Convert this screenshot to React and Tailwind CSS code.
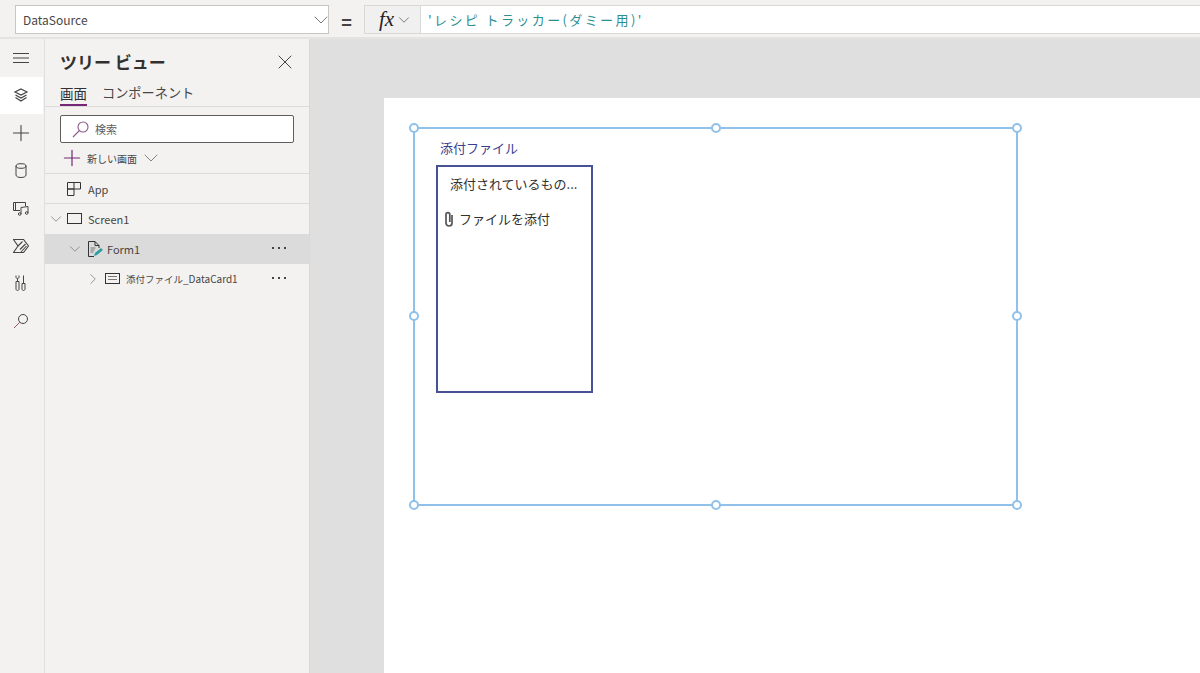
import { ChevronDown, ChevronRight, Plus, X } from 'lucide-react';

const font = 'font-["Noto_Sans_CJK_JP","Noto_Sans",sans-serif]';

function Rail() {
  const item = 'h-[37.6px] flex items-center justify-center pr-[2px]';
  return (
    <div className="w-[45px] shrink-0 border-r border-[#e1dfdd] flex flex-col pr-[1px]">
      <div className={item}>
        <svg width="16" height="12" viewBox="0 0 16 12" stroke="#444" fill="none"><path d="M0 1.5h16M0 6h16M0 10.5h16" /></svg>
      </div>
      <div className={`${item} bg-white`}>
        <svg width="16" height="16" viewBox="0 0 16 16" fill="none" stroke="#444" strokeWidth="1.2"><path d="M8 2l6 3-6 3-6-3zM2.500 8L8 11l5.500-3M2.500 10.500L8 14l5.500-3.500" /></svg>
      </div>
      <div className={item}><Plus size={26} strokeWidth={1} color="#444" /></div>
      <div className={item}>
        <svg width="12" height="15" viewBox="0 0 12 15" fill="none" stroke="#444"><path d="M1 3v9c0 1.500 2 2.500 5 2.500s5-1 5-2.500V3" /><ellipse cx="6" cy="3" rx="5" ry="2.300" /></svg>
      </div>
      <div className={item}>
        <svg width="16" height="15" viewBox="0 0 16 15" fill="none" stroke="#444"><path d="M7 9.500H.5v-8h12V5" /><path d="M2.500 1.500v8M8 6.500V13M15 5.500V12M8 6.500l7-1" /><circle cx="6.700" cy="13" r="1.300" /><circle cx="13.700" cy="12" r="1.300" /></svg>
      </div>
      <div className={item}>
        <svg width="16" height="14" viewBox="0 0 16 14" fill="none" stroke="#444" strokeWidth="1.100"><path d="M.5.500h10l5 6.500-5 6.500H.5L5 7z" /><path d="M5 7l4.500-4.500M7 10.500L12.500 5M8 13l5.500-6" /></svg>
      </div>
      <div className={item}>
        <svg width="11" height="16" viewBox="0 0 11 16" fill="none" stroke="#444"><path d="M1 6.500h3v7.500c0 .8-.6 1.500-1.500 1.500S1 14.800 1 14zM7 8.500h3V14c0 .8-.6 1.500-1.500 1.500S7 14.800 7 14zM2.500 6.500V3.500M8.500 8.500V.5M1 .5v1.500c0 1 .6 1.500 1.500 1.500S4 3 4 2V.5" /></svg>
      </div>
      <div className={item}>
        <svg width="16" height="16" viewBox="0 0 16 16" fill="none" stroke="#444"><circle cx="10" cy="6" r="4.500" /><path d="M6.800 9.200L1 15" stroke="#8a5a6a" /></svg>
      </div>
    </div>
  );
}

function Dots() {
  return (
    <div className="flex gap-[4px] ml-auto mr-[23px] mb-[3px]">
      <span className="w-[2px] h-[2px] bg-[#444]" />
      <span className="w-[2px] h-[2px] bg-[#444]" />
      <span className="w-[2px] h-[2px] bg-[#444]" />
    </div>
  );
}

function TreePanel() {
  return (
    <div className="w-[264px] shrink-0 flex flex-col">
      <div className="h-[44px] flex items-center pl-[15px] pr-[12px] pt-[1px]">
        <span className="text-[17px] font-semibold text-[#323130]">ツリー ビュー</span>
        <X size={24} strokeWidth={1} color="#444" className="ml-auto" />
      </div>
      <div className="h-[23px] flex gap-[15px] pl-[15px] border-b border-[#dddbd9] box-content">
        <span className="relative text-[13.500px] leading-[20px] text-[#323130]">
          画面
          <span className="absolute left-0 right-0 top-[21px] h-[2px] bg-[#742774]" />
        </span>
        <span className="text-[13.200px] leading-[20px] text-[#484644]">コンポーネント</span>
      </div>
      <div className="ml-[15px] mt-[8px] w-[234px] h-[28px] bg-white border border-[#605e5c] rounded-[2px] flex items-center pl-[11px] gap-[6px]">
        <svg width="17" height="17" viewBox="0 0 17 17" fill="none" stroke="#8a5a8a" strokeWidth="1.100"><circle cx="11" cy="6" r="5" /><path d="M7.500 9.500L1 16" /></svg>
        <span className="text-[11px] text-[#605e5c]">検索</span>
      </div>
      <div className="h-[31px] flex items-center pl-[14px] border-b border-[#dddbd9]">
        <Plus size={26} strokeWidth={1.100} color="#742774" />
        <span className="text-[10px] text-[#484644] ml-[2px]">新しい画面</span>
        <ChevronDown size={24} strokeWidth={0.8} color="#666" className="ml-[2px]" />
      </div>
      <div className="h-[30px] flex items-center pl-[22px] pt-[2px] border-b border-[#dddbd9]">
        <svg className="-mt-[2px]" width="14" height="14" viewBox="0 0 14 14" fill="none" stroke="#333"><path d="M.5.500h13v6.500H.5zM.5 7h6.500v6.500H.5zM7 .5V7" /></svg>
        <span className="text-[11px] text-[#484644] ml-[7px]">App</span>
      </div>
      <div className="h-[30px] flex items-center pl-[2px]">
        <ChevronDown size={18} strokeWidth={1} color="#777" />
        <svg className="ml-[2px]" width="16" height="12" viewBox="0 0 16 12" fill="none" stroke="#333"><rect x=".5" y=".5" width="14" height="10" /></svg>
        <span className="text-[11px] text-[#484644] ml-[5px]">Screen1</span>
      </div>
      <div className="h-[30px] flex items-center pl-[21px] bg-[#dbdbdb]">
        <ChevronDown size={18} strokeWidth={1} color="#777" />
        <svg className="ml-[3px]" width="16" height="16" viewBox="0 0 16 16" fill="none"><path d="M7 15.500H1.500V.5H8l4 4V7M8 .5v4h4" stroke="#333" /><path d="M3.500 7h5M3.500 9h4M3.500 11h3" stroke="#777" /><path d="M7 15l1-3 6-5 2 2-6 5z" fill="#2f9ea0" /></svg>
        <span className="text-[11px] text-[#484644] ml-[4px]">Form1</span>
        <Dots />
      </div>
      <div className="h-[30px] flex items-center pl-[39px]">
        <ChevronRight size={18} strokeWidth={1} color="#777" />
        <svg className="ml-[3px]" width="16" height="12" viewBox="0 0 16 12" fill="none" stroke="#333"><rect x=".5" y=".5" width="14" height="10" /><path d="M3 3.500h9M3 6.500h9" stroke="#777" /></svg>
        <span className="text-[9.500px] text-[#484644] ml-[5px] whitespace-nowrap">添付ファイル<span className="text-[10px]">_DataCard1</span></span>
        <Dots />
      </div>
    </div>
  );
}

function Handle({ className }) {
  return <span className={`absolute w-[10px] h-[10px] rounded-full bg-white border-2 border-[#8fc1ea] ${className}`} />;
}

export default function App() {
  return (
    <div className={`w-[1200px] h-[673px] overflow-hidden bg-[#f3f2f1] flex flex-col ${font}`}>
      <div className="h-[39px] shrink-0 flex items-start pt-[5px] pl-[15px] border-b-2 border-[#e4e3e2]">
        <div className="w-[314px] h-[29px] bg-white border border-[#c8c6c4] flex items-center pl-[7px] pr-[2px]">
          <span className="text-[12px] text-[#484644]">DataSource</span>
          <ChevronDown size={24} strokeWidth={0.8} color="#555" className="ml-auto -mr-[7px]" />
        </div>
        <span className="w-[35px] text-center text-[18px] leading-[30px] font-bold text-[#444] pt-[1px]">=</span>
        <div className="w-[57px] h-[29px] bg-[#f0f0f0] border border-[#d8d8d8] flex items-center pl-[14px]">
          <span className="font-['Liberation_Serif',serif] italic text-[21px] text-[#222] leading-none">fx</span>
          <ChevronDown size={18} strokeWidth={1} color="#555" className="ml-[1px]" />
        </div>
        <div className="flex-1 h-[29px] bg-white border-y border-[#d8d8d8] flex items-center pl-[7px]">
          <span className="text-[13px] tracking-[2.400px] text-[#2b8f94] whitespace-pre">'レシピ トラッカー(ダミー用)'</span>
        </div>
      </div>
      <div className="flex-1 flex min-h-0">
        <Rail />
        <TreePanel />
        <div className="flex-1 bg-[#dfdfdf] flex flex-col border-l border-[#d8d8d8] pt-[59px] pl-[74px]">
          <div className="flex-1 bg-white relative">
            <div className="absolute left-[29px] top-[29px] w-[605px] h-[379px] border-2 border-[#8fc1ea]">
              <Handle className="-left-[6px] -top-[6px]" />
              <Handle className="left-[296px] -top-[6px]" />
              <Handle className="-right-[6px] -top-[6px]" />
              <Handle className="-left-[6px] top-[182px]" />
              <Handle className="-right-[6px] top-[182px]" />
              <Handle className="-left-[6px] -bottom-[6px]" />
              <Handle className="left-[296px] -bottom-[6px]" />
              <Handle className="-right-[6px] -bottom-[6px]" />
              <div className="absolute left-[25px] top-[9px] text-[13px] text-[#3a3f8f]">添付ファイル</div>
              <div className="absolute left-[21px] top-[36px] w-[157px] h-[228px] border-2 border-[#4a5296] flex flex-col">
                <div className="text-[13px] text-[#323130] pl-[12px] pt-[7px] leading-[20px] whitespace-nowrap">添付されているもの...</div>
                <div className="flex items-center pl-[6px] mt-[15px]">
                  <svg width="10" height="16" viewBox="0 0 10 16" fill="none" stroke="#555" strokeWidth="1.700"><path d="M8 4v8a3 3 0 0 1-6 0V3.500a1.900 1.900 0 0 1 3.800 0V11" /></svg>
                  <span className="text-[13px] text-[#323130] ml-[5px] leading-[20px]">ファイルを添付</span>
                </div>
              </div>
            </div>
          </div>
        </div>
      </div>
    </div>
  );
}
